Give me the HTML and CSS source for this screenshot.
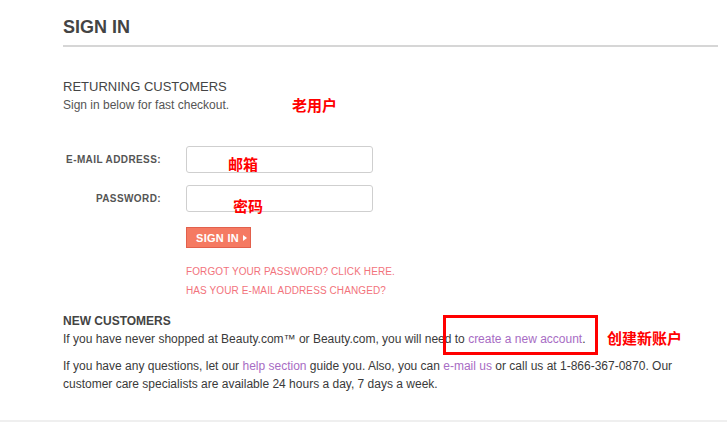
FILE: index.html
```html
<!DOCTYPE html>
<html lang="en">
  <head>
    <meta charset="utf-8" />
    <meta name="viewport" content="width=device-width, initial-scale=1" />
    <title>Sign In</title>
    <link rel="stylesheet" href="styles.css">
  </head>
  <body>
    <div class="page">
      <h1 class="title">SIGN IN</h1>

      <!-- returning customers -->
      <div class="section">
        <h2>RETURNING CUSTOMERS</h2>
        <p class="sub">Sign in below for fast checkout.</p>

        <form class="login">
          <div class="row">
            <label for="email">E-MAIL ADDRESS:</label>
            <input id="email" name="email" type="text" />
          </div>
          <div class="row">
            <label for="pass">PASSWORD:</label>
            <input id="pass" name="pass" type="password" />
          </div>
          <button type="submit" class="btn">SIGN IN <span class="arrow"></span></button>
        </form>

        <div class="help-links">
          <a href="#">FORGOT YOUR PASSWORD? CLICK HERE.</a>
          <a href="#">HAS YOUR E-MAIL ADDRESS CHANGED?</a>
        </div>
      </div>

      <!-- new customers -->
      <div class="section new">
        <h3>NEW CUSTOMERS</h3>
        <p>If you have never shopped at Beauty.com&trade; or Beauty.com, you will need to <a href="#">create a new account</a>.</p>
        <p class="more">If you have any questions, let our <a href="#">help section</a> guide you. Also, you can <a href="#">e-mail us</a> or call us at 1-866-367-0870. Our customer care specialists are available 24 hours a day, 7 days a week.</p>
      </div>

      <!-- red notes drawn over the screenshot -->
      <span class="note note-old">老用户</span>
      <span class="note note-mail">邮箱</span>
      <span class="note note-pass">密码</span>
      <span class="note note-new">创建新账户</span>
      <span class="mark"></span>
    </div>
    <div class="footer"></div>
  </body>
</html>
```

FILE: styles.css
```css
body {
  margin: 0;
  font-family: "Liberation Sans", Arial, sans-serif;
  color: #3a3a3a;
  background: #fff;
}

.page {
  position: relative;
  width: 655px;
  padding: 0 0 27px 63px;
}

.title {
  margin: 0;
  padding: 16px 0 7px;
  font-size: 18px;
  line-height: 22px;
  color: #444;
  border-bottom: 2px solid #d6d6d6;
}

.section h2 {
  margin: 32px 0 0;
  font-size: 13px;
  font-weight: normal;
  line-height: 16px;
  color: #444;
}

.sub {
  margin: 2px 0 0;
  font-size: 12px;
  line-height: 16px;
  color: #555;
}

.login {
  margin-top: 33px;
}

.row {
  display: flex;
  align-items: center;
  margin-bottom: 12px;
}

.row label {
  width: 98px;
  margin-right: 25px;
  text-align: right;
  font-size: 10px;
  font-weight: bold;
  letter-spacing: 0.4px;
  color: #555;
}

.row input {
  width: 187px;
  height: 27px;
  box-sizing: border-box;
  border: 1px solid #cfcfcf;
  border-radius: 3px;
  padding: 0 6px;
}

.btn {
  display: flex;
  align-items: center;
  gap: 4px;
  margin: 15px 0 0 123px;
  height: 21px;
  width: 65px;
  padding: 0 0 0 9px;
  border: 1px solid #e2604c;
  background-color: #f57a62;
  color: #fff;
  font-family: "Liberation Sans", Arial, sans-serif;
  font-size: 11px;
  font-weight: bold;
  letter-spacing: 0.3px;
  cursor: pointer;
}

.arrow {
  width: 0;
  height: 0;
  border-left: 4px solid #fff;
  border-top: 3px solid transparent;
  border-bottom: 3px solid transparent;
}

.help-links {
  margin: 14px 0 0 123px;
}

.help-links a {
  display: block;
  font-size: 10px;
  line-height: 19px;
  letter-spacing: 0.1px;
  color: #f2737c;
  text-decoration: none;
}

.new h3 {
  margin: 12px 0 0;
  font-size: 12px;
  line-height: 18px;
  color: #444;
}

.new p {
  margin: 0;
  font-size: 12px;
  line-height: 18px;
}

.new p.more {
  margin-top: 9px;
  width: 630px;
}

.new a {
  color: #a76cc4;
  text-decoration: none;
}

.note {
  position: absolute;
  font-family: "Noto Sans CJK SC", sans-serif;
  font-size: 15px;
  font-weight: bold;
  line-height: 15px;
  color: #ff0000;
}

.note-old { left: 292px; top: 97px; }
.note-mail { left: 228px; top: 156px; }
.note-pass { left: 233px; top: 198px; }
.note-new { left: 607px; top: 330px; }

.mark {
  position: absolute;
  left: 443px;
  top: 315px;
  width: 149px;
  height: 34px;
  border: 3px solid #ff0000;
}

.footer {
  height: 2px;
  background: #efefef;
}
```
